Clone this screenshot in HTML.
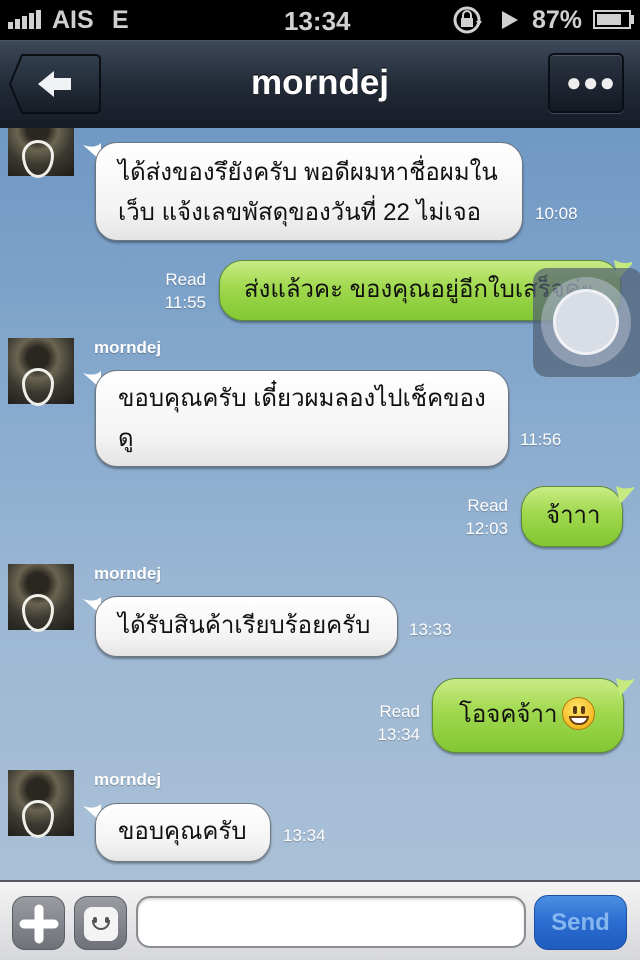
<!DOCTYPE html>
<html><head><meta charset="utf-8"><style>
*{margin:0;padding:0;box-sizing:border-box}
body{width:640px;height:960px;overflow:hidden;position:relative;font-family:"Liberation Sans","DejaVu Sans",sans-serif;background:#000}
.abs{position:absolute}
#status{left:0;top:0;width:640px;height:40px;background:#000;color:#d0d0d0;font-weight:bold;font-size:25px}
#nav{left:0;top:40px;width:640px;height:88px;background:linear-gradient(#3d4859,#232b38 50%,#171c26);border-top:1px solid #4a5566}
.nb{background:linear-gradient(#2c3442,#141923);border:2px solid #0b0e14;border-radius:6px;box-shadow:inset 0 1px 0 #4a5567,0 1px 0 #3e4a5a}
#content{left:0;top:128px;width:640px;height:752px;background:linear-gradient(#6f98c4 0%,#86a9cd 35%,#9db8d4 65%,#a9c0d6 100%);overflow:hidden}
.av{position:absolute;left:8px;width:66px;height:66px;background:radial-gradient(circle at 45% 30%,#2a2620 0 18%,#6a6450 35%,#3a3830 60%,#1e1c18 100%)}
.av:after{content:"";position:absolute;left:14px;top:30px;width:26px;height:32px;border:3px solid #f0f0ea;border-radius:50% 50% 50% 50%/40% 40% 60% 60%}
.name{position:absolute;left:94px;color:#fff;font-weight:bold;font-size:17px;text-shadow:0 1px 1px rgba(0,0,0,.3)}
.w,.g{white-space:nowrap}
.w{position:absolute;background:linear-gradient(#fff,#f3f3f3 70%,#e4e4e4);border-radius:22px;border:1px solid #6c7680;box-shadow:0 2px 2px rgba(0,0,0,.35);color:#111;font-size:24px;line-height:40px;padding:0 22px}
.g{position:absolute;background:linear-gradient(#c9ec85,#a0d84e 45%,#82c732);border-radius:24px;border:1px solid #5e8a3a;box-shadow:0 2px 2px rgba(0,0,0,.35);color:#111;font-size:24px;line-height:40px;padding:0 24px}
.tl{position:absolute;width:18px;height:18px}
.t{position:absolute;color:#fff;font-size:17px;line-height:23px;text-shadow:0 1px 1px rgba(0,0,0,.25)}
#bar{left:0;top:880px;width:640px;height:80px;background:linear-gradient(#f4f4f4,#d6d7da);border-top:2px solid #555a60}
.ib{position:absolute;top:14px;width:53px;height:54px;border-radius:13px;background:linear-gradient(#9a9ca2,#6e7178);border:1px solid #5b5e64}
</style></head><body>
<div id="status" class="abs">
 <svg class="abs" style="left:8px;top:10px" width="36" height="20"><rect x="0" y="12" width="5" height="7" fill="#d0d0d0"/><rect x="7" y="9" width="5" height="10" fill="#d0d0d0"/><rect x="14" y="6" width="5" height="13" fill="#d0d0d0"/><rect x="21" y="3" width="5" height="16" fill="#d0d0d0"/><rect x="28" y="0" width="5" height="19" fill="#d0d0d0"/></svg>
 <span class="abs" style="left:52px;top:6px">AIS</span><span class="abs" style="left:112px;top:6px">E</span>
 <span class="abs" style="left:284px;top:6px;font-size:26px">13:34</span>
 <svg class="abs" style="left:452px;top:5px" width="40" height="30"><circle cx="15" cy="15" r="12" fill="none" stroke="#d0d0d0" stroke-width="3"/><rect x="9" y="13" width="12" height="9" fill="#d0d0d0"/><path d="M11 13v-3a4 4 0 0 1 8 0v3" fill="none" stroke="#d0d0d0" stroke-width="2"/><path d="M24 16l6 0-3 5z" fill="#d0d0d0"/></svg>
 <svg class="abs" style="left:500px;top:10px" width="20" height="20"><path d="M2 1L18 10L2 19Z" fill="#d0d0d0"/></svg>
 <span class="abs" style="left:532px;top:6px">87%</span>
 <div class="abs" style="left:593px;top:10px;width:38px;height:19px;border:2px solid #d0d0d0;padding:2px"><div style="width:80%;height:100%;background:#d0d0d0"></div></div>
 <div class="abs" style="left:631px;top:15px;width:3px;height:9px;background:#d0d0d0"></div>
</div>
<div id="nav" class="abs">
 <svg class="abs" style="left:8px;top:12px" width="94" height="62"><defs><linearGradient id="bg" x1="0" y1="0" x2="0" y2="1"><stop offset="0" stop-color="#334050"/><stop offset="1" stop-color="#161b24"/></linearGradient></defs><path d="M14 2H88a4 4 0 0 1 4 4V56a4 4 0 0 1-4 4H14L2 31Z" fill="url(#bg)" stroke="#0b0e14" stroke-width="2"/><path d="M30 31L46 18V25H63V37H46V44Z" fill="#f0f2f5"/></svg>
 <div class="nb abs" style="left:548px;top:12px;width:76px;height:60px"><span class="abs" style="left:16px;top:22px;color:#eee;font-size:26px;line-height:10px;font-weight:bold;letter-spacing:1px">●●●</span></div>
 <div class="abs" style="left:0;width:640px;top:22px;text-align:center;color:#fff;font-weight:bold;font-size:35px;text-shadow:0 -1px 0 #000">morndej</div>
</div>
<div id="content" class="abs">
 <div class="av" style="top:-18px"></div>
 <svg class="tl" style="left:83px;top:15px" width="20" height="20"><path d="M0 2Q12 6 18 0V18Z" fill="#fff"/></svg>
 <div class="w" style="left:95px;top:14px;width:428px;height:99px;padding-top:10px">ได้ส่งของรึยังครับ พอดีผมหาชื่อผมใน<br>เว็บ แจ้งเลขพัสดุของวันที่ 22 ไม่เจอ</div>
 <div class="t" style="left:535px;top:74px">10:08</div>

 <div class="t" style="left:160px;top:140px;text-align:right;width:46px">Read<br>11:55</div>
 <div class="g" style="left:219px;top:132px;width:402px;height:61px;padding-top:9px">ส่งแล้วคะ ของคุณอยู่อีกใบเสร็จค่ะ</div>
 <svg class="tl" style="left:614px;top:132px" width="22" height="22"><path d="M0 0Q12 6 22 0Q12 10 4 20Z" fill="#c6ea80"/></svg>
 <div class="abs" style="left:533px;top:140px;width:110px;height:109px;border-radius:14px;background:rgba(80,95,115,.7)"></div>
 <div class="abs" style="left:541px;top:149px;width:90px;height:90px;border-radius:50%;background:rgba(180,190,205,.55)"></div>
 <div class="abs" style="left:553px;top:161px;width:66px;height:66px;border-radius:50%;border:3px solid rgba(255,255,255,.6);background:#d8dde6"></div>

 <div class="av" style="top:210px"></div>
 <div class="name" style="top:210px">morndej</div>
 <svg class="tl" style="left:83px;top:243px" width="20" height="20"><path d="M0 2Q12 6 18 0V18Z" fill="#fff"/></svg>
 <div class="w" style="left:95px;top:242px;width:414px;height:97px;padding-top:8px">ขอบคุณครับ เดี๋ยวผมลองไปเช็คของ<br>ดู</div>
 <div class="t" style="left:520px;top:300px">11:56</div>

 <div class="t" style="left:462px;top:366px;text-align:right;width:46px">Read<br>12:03</div>
 <div class="g" style="left:521px;top:358px;width:102px;height:61px;padding-top:9px;padding-left:24px;padding-right:0">จ้าาา</div>
 <svg class="tl" style="left:616px;top:358px" width="20" height="20"><path d="M0 0Q10 5 20 0Q12 10 4 18Z" fill="#c6ea80"/></svg>

 <div class="av" style="top:436px"></div>
 <div class="name" style="top:436px">morndej</div>
 <svg class="tl" style="left:83px;top:469px" width="20" height="20"><path d="M0 2Q12 6 18 0V18Z" fill="#fff"/></svg>
 <div class="w" style="left:95px;top:468px;width:303px;height:61px;padding-top:9px">ได้รับสินค้าเรียบร้อยครับ</div>
 <div class="t" style="left:409px;top:490px">13:33</div>

 <div class="t" style="left:372px;top:572px;text-align:right;width:48px">Read<br>13:34</div>
 <div class="g" style="left:432px;top:550px;width:192px;height:75px;padding-top:16px;padding-left:26px">โอจคจ้าา</div>
 <div class="abs" style="left:562px;top:569px;width:33px;height:33px;border-radius:50%;background:radial-gradient(circle at 45% 35%,#ffe66a,#f4b41a 80%,#c98a10);border:1px solid #b07a10"><div class="abs" style="left:10px;top:8px;width:4px;height:8px;background:#5a3a10;border-radius:2px"></div><div class="abs" style="left:18px;top:8px;width:4px;height:8px;background:#5a3a10;border-radius:2px"></div><div class="abs" style="left:6px;top:18px;width:20px;height:9px;background:#fff;border:2px solid #6a4010;border-radius:0 0 10px 10px"></div></div>
 <svg class="tl" style="left:616px;top:550px" width="20" height="20"><path d="M0 0Q10 5 20 0Q12 10 4 18Z" fill="#c6ea80"/></svg>

 <div class="av" style="top:642px"></div>
 <div class="name" style="top:642px">morndej</div>
 <svg class="tl" style="left:83px;top:676px" width="20" height="20"><path d="M0 2Q12 6 18 0V18Z" fill="#fff"/></svg>
 <div class="w" style="left:95px;top:675px;width:176px;height:59px;padding-top:8px">ขอบคุณครับ</div>
 <div class="t" style="left:283px;top:696px">13:34</div>
</div>
<div id="bar" class="abs">
 <div class="ib" style="left:12px"><svg width="53" height="54"><path d="M26 12V42M11 27H41" stroke="#fff" stroke-width="9" stroke-linecap="round"/></svg></div>
 <div class="ib" style="left:74px"><div class="abs" style="left:9px;top:10px;width:34px;height:34px;border-radius:8px;background:#f4f4f4"><div class="abs" style="left:9px;top:10px;width:4px;height:6px;background:#555;border-radius:2px"></div><div class="abs" style="left:21px;top:10px;width:4px;height:6px;background:#555;border-radius:2px"></div><div class="abs" style="left:8px;top:13px;width:18px;height:10px;border:2px solid #555;border-top:none;border-radius:0 0 10px 10px"></div></div></div>
 <div class="abs" style="left:136px;top:14px;width:390px;height:52px;border-radius:14px;background:#fff;border:2px solid #8a8d92;box-shadow:inset 0 2px 2px rgba(0,0,0,.15)"></div>
 <div class="abs" style="left:534px;top:13px;width:93px;height:55px;border-radius:14px;background:linear-gradient(#4a8ee2,#2a6cd0 50%,#1f5cbf);border:1px solid #1d4fa0;color:#86b6ef;font-weight:bold;font-size:24px;text-align:center;line-height:53px">Send</div>
</div>
</body></html>
